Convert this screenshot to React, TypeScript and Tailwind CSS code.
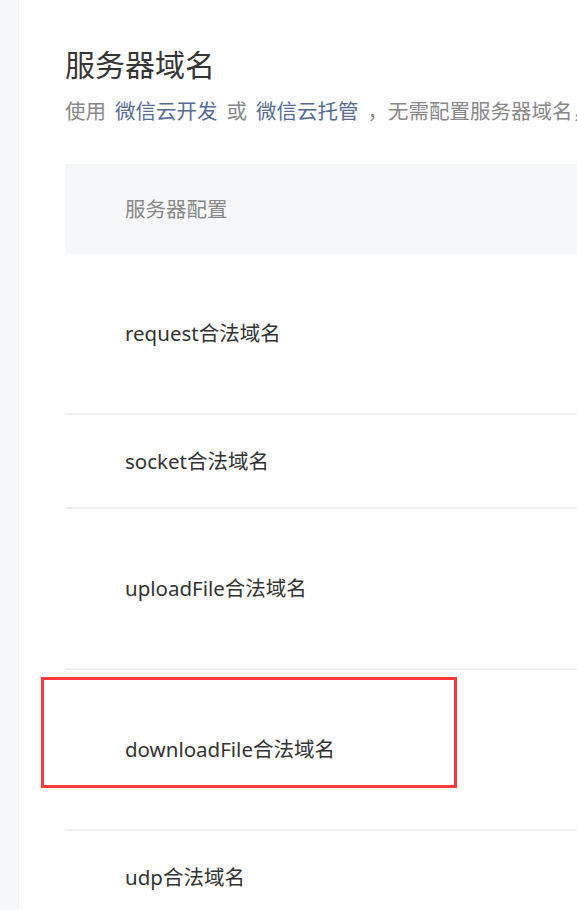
import React from "react";

const rows = [
  { name: "request合法域名", h: "h-[161px]" },
  { name: "socket合法域名", h: "h-[94px]" },
  { name: "uploadFile合法域名", h: "h-[161px]" },
  { name: "downloadFile合法域名", h: "h-[161px]" },
  { name: "udp合法域名", h: "h-[94px]" },
];

// faint repeated watermark laid over the page
const Watermark = () => (
  <div className="pointer-events-none absolute left-[-8px] top-[-28px] flex flex-col select-none">
    {Array(15)
      .fill(null)
      .map((_, r) => (
        <div key={r} className="flex h-[69.6px] items-center gap-[124px]">
          {Array(3)
            .fill(null)
            .map((_, c) => (
              <span
                key={c}
                className="w-[82px] text-[20px] leading-none text-black/[0.018]"
              >
                s5OL2Tg
              </span>
            ))}
        </div>
      ))}
  </div>
);

export default function App() {
  return (
    <div className="relative flex h-[910px] w-[577px] overflow-hidden bg-white font-['Noto_Sans','Noto_Sans_CJK_SC',sans-serif]">
      <div className="w-[19px] shrink-0 border-r border-[#eef0f3] bg-[#f6f7f9]" />

      <div className="flex min-w-0 flex-1 flex-col pl-[46px] pt-[45px]">
        <h1 className="h-[40px] whitespace-nowrap text-[30px] leading-[40px] text-[#353535]">
          服务器域名
        </h1>
        <p className="mt-[12px] flex h-[28px] items-center whitespace-nowrap text-[20.5px] leading-[28px] text-[#888888]">
          <span>使用</span>
          <span className="ml-[9px] text-[#576b95]">微信云开发</span>
          <span className="ml-[9px]">或</span>
          <span className="ml-[9px] text-[#576b95]">微信云托管</span>
          <span className="ml-[9px]">，</span>
          <span>无需配置服务器域名，可直接调用云开发能力。</span>
        </p>

        <div className="mt-[39px] w-[900px]">
          <div className="flex h-[90px] items-center bg-[#f6f7f9] pl-[60px] text-[20.5px] text-[#888888]">
            服务器配置
          </div>
          {rows.map((row) => (
            <div
              key={row.name}
              className={`flex ${row.h} items-center border-b-2 border-[#efefef] pl-[60px] text-[20.5px] text-[#333333]`}
            >
              {row.name}
            </div>
          ))}
        </div>
      </div>

      <Watermark />

      {/* annotation box */}
      <div className="pointer-events-none absolute left-[41px] top-[677px] h-[111px] w-[416px] border-[3px] border-[#fb3a3a]" />
    </div>
  );
}
